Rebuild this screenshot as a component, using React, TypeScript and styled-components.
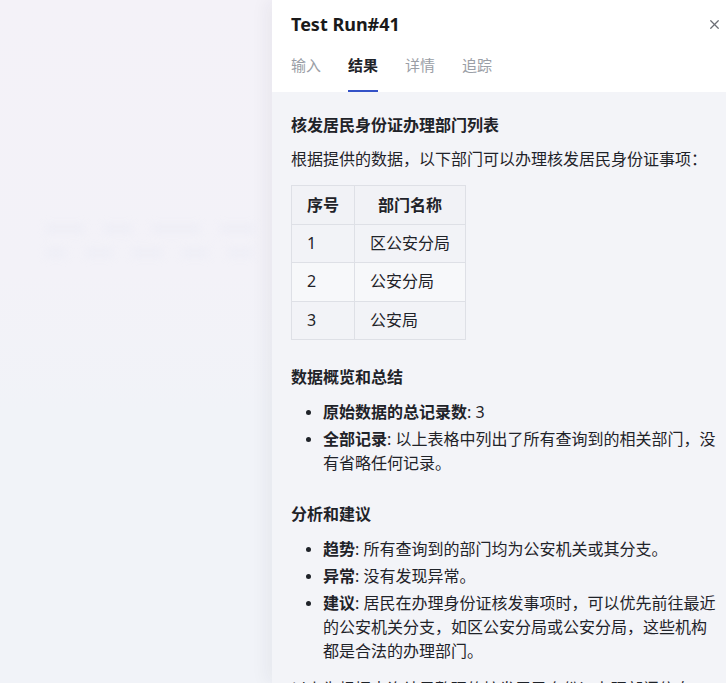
import React from "react";
import styled, { createGlobalStyle } from "styled-components";
import { X } from "lucide-react";

const Global = createGlobalStyle`
  html, body { margin: 0; padding: 0; }
  body {
    font-family: "Noto Sans", "Noto Sans CJK SC", sans-serif;
    color: #1f2329;
    -webkit-font-smoothing: antialiased;
  }
  * { box-sizing: border-box; }
`;

const Page = styled.div`
  display: flex;
  width: 726px;
  height: 683px;
  overflow: hidden;
  background: linear-gradient(180deg, #f4f2f8 0%, #f3f2f8 40%, #f1f3f8 60%, #f1f3f8 100%);
`;

const Backdrop = styled.div`
  flex: 0 0 272px;
  width: 272px;
  min-width: 0;
  overflow: hidden;
  display: flex;
  flex-direction: column;
  justify-content: center;
  padding: 0 0 200px 0;
  filter: blur(4px);
  opacity: 0.4;
`;

const GhostRow = styled.div`
  display: flex;
  gap: 18px;
  padding-left: 45px;
  height: 18px;
  margin-top: 6px;
`;

const GhostCell = styled.div<{ $w: number }>`
  width: ${(p) => p.$w}px;
  height: 10px;
  background: #e8e9f4;
  border-radius: 2px;
`;

const Panel = styled.div`
  flex: 1;
  min-width: 0;
  display: flex;
  flex-direction: column;
  background: #f3f4f8;
  box-shadow: -6px 0 16px rgba(30, 30, 60, 0.05);
  overflow: hidden;
`;

const Header = styled.div`
  background: #ffffff;
  padding: 0 4px 0 19px;
`;

const TitleRow = styled.div`
  display: flex;
  align-items: center;
  justify-content: space-between;
  height: 48px;
`;

const Title = styled.h1`
  margin: 0;
  font-size: 18px;
  font-weight: 700;
  color: #1a1a1a;
`;

const Close = styled.button`
  border: none;
  background: transparent;
  padding: 0;
  display: flex;
  color: #6b6e75;
  cursor: pointer;
`;

const Tabs = styled.div`
  display: flex;
  gap: 27px;
  height: 44px;
`;

const Tab = styled.div<{ $active?: boolean }>`
  position: relative;
  padding-top: 6px;
  font-size: 15px;
  line-height: 22px;
  font-weight: ${(p) => (p.$active ? 600 : 400)};
  color: ${(p) => (p.$active ? "#1f2329" : "#9a9ea6")};
  &::after {
    content: "";
    display: ${(p) => (p.$active ? "block" : "none")};
    position: absolute;
    left: 0;
    right: 0;
    bottom: 0;
    height: 2px;
    background: #3452c7;
  }
`;

const Content = styled.div`
  padding: 21px 8px 0 19px;
  font-size: 16px;
  line-height: 24px;
  color: #1f2329;
`;

const Heading = styled.h3<{ $top?: number }>`
  margin: ${(p) => p.$top ?? 0}px 0 0;
  font-size: 16px;
  line-height: 24px;
  font-weight: 700;
`;

const Para = styled.p<{ $top?: number }>`
  margin: ${(p) => p.$top ?? 0}px 0 0;
`;

const Table = styled.table`
  margin-top: 14px;
  border-collapse: collapse;
  font-size: 16px;
`;

const Th = styled.th`
  border: 1px solid #dee0e6;
  padding: 7px 15px;
  line-height: 24px;
  font-weight: 700;
  text-align: center;
  background: #f1f2f6;
`;

const Tr = styled.tr`
  &:nth-child(even) td {
    background: #f7f8fa;
  }
`;

const Td = styled.td`
  border: 1px solid #dee0e6;
  padding: 7px 15px;
  line-height: 23.4px;
  text-align: left;
  background: #f2f3f7;
`;

const List = styled.ul<{ $top?: number }>`
  margin: ${(p) => p.$top ?? 11}px 0 0;
  padding-left: 32px;
`;

const Item = styled.li`
  margin-top: 3px;
  &:first-child {
    margin-top: 0;
  }
  &::marker {
    font-size: 14px;
  }
`;

const Strong = styled.strong`
  font-weight: 700;
`;

const rows = [
  ["1", "区公安分局"],
  ["2", "公安分局"],
  ["3", "公安局"],
];

export default function App() {
  return (
    <>
      <Global />
      <Page>
        <Backdrop>
          <GhostRow>
            <GhostCell $w={40} />
            <GhostCell $w={30} />
            <GhostCell $w={50} />
            <GhostCell $w={36} />
          </GhostRow>
          <GhostRow>
            <GhostCell $w={22} />
            <GhostCell $w={28} />
            <GhostCell $w={32} />
            <GhostCell $w={28} />
            <GhostCell $w={26} />
          </GhostRow>
        </Backdrop>
        <Panel>
          <Header>
            <TitleRow>
              <Title>Test Run#41</Title>
              <Close aria-label="close">
                <X size={15} strokeWidth={2} />
              </Close>
            </TitleRow>
            <Tabs>
              <Tab>输入</Tab>
              <Tab $active>结果</Tab>
              <Tab>详情</Tab>
              <Tab>追踪</Tab>
            </Tabs>
          </Header>
          <Content>
            <Heading>核发居民身份证办理部门列表</Heading>
            <Para $top={10}>根据提供的数据，以下部门可以办理核发居民身份证事项：</Para>
            <Table>
              <thead>
                <tr>
                  <Th>序号</Th>
                  <Th>部门名称</Th>
                </tr>
              </thead>
              <tbody>
                {rows.map(([n, name]) => (
                  <Tr key={n}>
                    <Td>{n}</Td>
                    <Td>{name}</Td>
                  </Tr>
                ))}
              </tbody>
            </Table>
            <Heading $top={25}>数据概览和总结</Heading>
            <List>
              <Item>
                <Strong>原始数据的总记录数</Strong>: 3
              </Item>
              <Item>
                <Strong>全部记录</Strong>: 以上表格中列出了所有查询到的相关部门，没有省略任何记录。
              </Item>
            </List>
            <Heading $top={27}>分析和建议</Heading>
            <List>
              <Item>
                <Strong>趋势</Strong>: 所有查询到的部门均为公安机关或其分支。
              </Item>
              <Item>
                <Strong>异常</Strong>: 没有发现异常。
              </Item>
              <Item>
                <Strong>建议</Strong>: 居民在办理身份证核发事项时，可以优先前往最近的公安机关分支，如区公安分局或公安分局，这些机构都是合法的办理部门。
              </Item>
            </List>
            <Para $top={14}>以上为根据查询结果整理的核发居民身份证办理部门信息，如需了解更多详情，请联系相关部门。</Para>
          </Content>
        </Panel>
      </Page>
    </>
  );
}
